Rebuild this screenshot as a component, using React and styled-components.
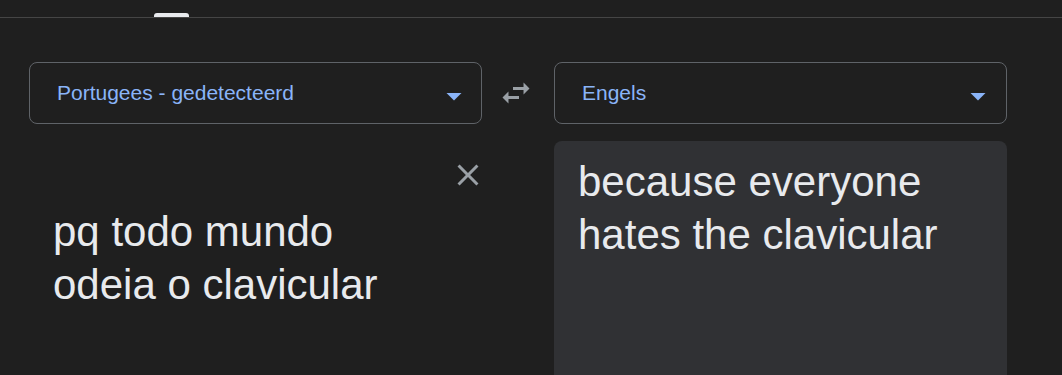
import React from "react"
import styled, { createGlobalStyle } from "styled-components"

const GlobalStyle = createGlobalStyle`
  html, body {
    margin: 0;
    padding: 0;
    background-color: #1f1f1f;
    overflow: hidden;
  }

  body {
    font-family: "Liberation Sans", Arial, sans-serif;
    height: 375px;
  }
`

const Page = styled.div`
  height: 375px;
  background-color: #1f1f1f;
  display: flex;
  flex-direction: column;
`

const TopBar = styled.div`
  height: 17px;
  border-bottom: 1px solid #454545;
  display: flex;
  align-items: flex-end;
  padding-left: 154px;
`

const TabIndicator = styled.div`
  width: 35px;
  height: 4px;
  border-radius: 3px 3px 0 0;
  background-color: #e8eaed;
`

const Main = styled.main`
  flex: 1;
  display: grid;
  grid-template-columns: 453px 72px 453px;
  grid-template-rows: 62px 1fr;
  row-gap: 17px;
  padding: 44px 0 0 29px;
  min-height: 0;
`

const LanguageSelect = styled.div`
  box-sizing: border-box;
  height: 62px;
  border: 1px solid #5f6368;
  border-radius: 8px;
  display: flex;
  align-items: center;
  justify-content: space-between;
  padding: 0 ${({ $right }) => $right}px 0 27px;
  color: #8ab4f8;
  font-size: 21px;
  cursor: pointer;
`

const Caret = styled.svg`
  width: 36px;
  height: 36px;
  margin-top: 5px;
  fill: #8ab4f8;
`

const SwapCell = styled.div`
  display: flex;
  align-items: center;
  justify-content: center;
  padding-right: 4px;
`

const IconButton = styled.svg`
  width: 36px;
  height: 36px;
  fill: #9aa0a6;
  cursor: pointer;
`

const InputPanel = styled.div`
  display: flex;
  flex-direction: column;
  padding-top: 16px;
`

const CloseRow = styled.div`
  display: flex;
  justify-content: flex-end;
  margin-right: -4px;
`

const TranslationText = styled.div`
  color: #e8eaed;
  font-size: 42px;
  line-height: 53px;
  padding: ${({ $top }) => $top}px 24px 0 24px;
`

const OutputPanel = styled.div`
  grid-column: 3;
  background-color: #303134;
  border-radius: 8px 8px 0 0;
  padding-top: 14px;
`

const ArrowDown = () => (
  <Caret viewBox="0 0 24 24">
    <path d="M7 10l5 5 5-5z" />
  </Caret>
)

const App = () => (
  <>
    <GlobalStyle />
    <Page>
      <TopBar>
        <TabIndicator />
      </TopBar>

      <Main>
        <LanguageSelect $right={9}>
          <span>Portugees - gedetecteerd</span>
          <ArrowDown />
        </LanguageSelect>

        <SwapCell>
          <IconButton viewBox="0 0 24 24">
            <path d="M6.99 11L3 15l3.99 4v-3H14v-2H6.99v-3zM21 9l-3.99-4v3H10v2h7.01v3L21 9z" />
          </IconButton>
        </SwapCell>

        <LanguageSelect $right={10}>
          <span>Engels</span>
          <ArrowDown />
        </LanguageSelect>

        <InputPanel>
          <CloseRow>
            <IconButton viewBox="0 0 24 24">
              <path d="M19 6.41L17.59 5 12 10.59 6.41 5 5 6.41 10.59 12 5 17.59 6.41 19 12 13.41 17.59 19 19 17.59 13.41 12z" />
            </IconButton>
          </CloseRow>
          <TranslationText $top={12}>
            pq todo mundo
            <br />
            odeia o clavicular
          </TranslationText>
        </InputPanel>

        <OutputPanel>
          <TranslationText $top={0}>
            because everyone
            <br />
            hates the clavicular
          </TranslationText>
        </OutputPanel>
      </Main>
    </Page>
  </>
)

export default App
